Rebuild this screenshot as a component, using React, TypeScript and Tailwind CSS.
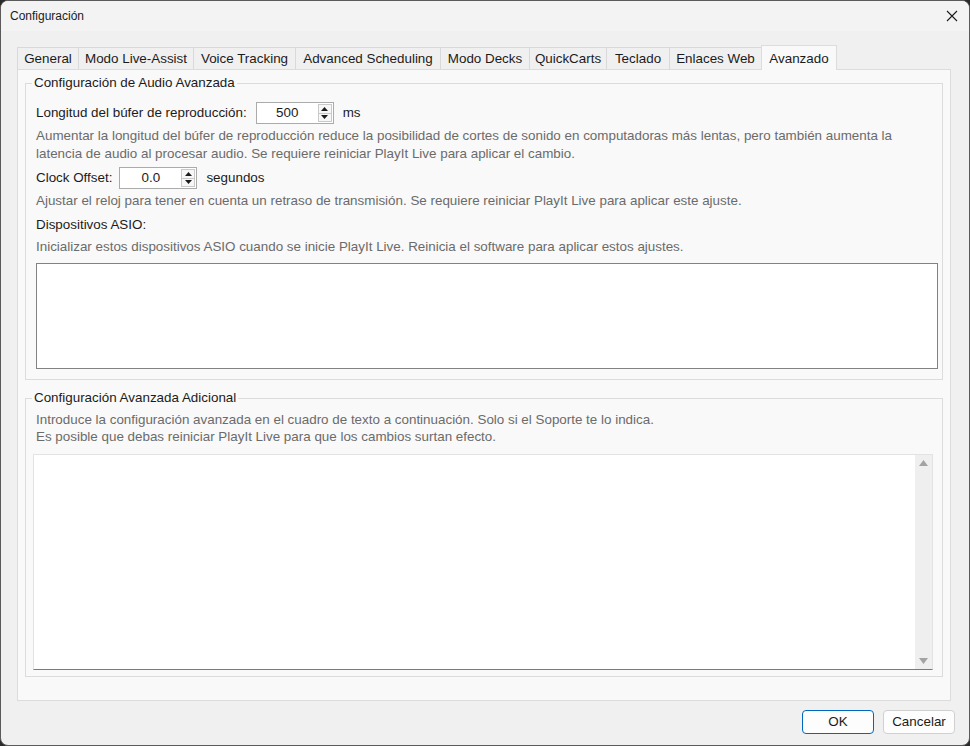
import React from 'react';

const tabs = [
  { label: 'General', w: 'w-[61px]' },
  { label: 'Modo Live-Assist', w: 'w-[115px]' },
  { label: 'Voice Tracking', w: 'w-[102px]' },
  { label: 'Advanced Scheduling', w: 'w-[145px]' },
  { label: 'Modo Decks', w: 'w-[89px]' },
  { label: 'QuickCarts', w: 'w-[77px]' },
  { label: 'Teclado', w: 'w-[63px]' },
  { label: 'Enlaces Web', w: 'w-[92px]' },
];

const Arrow = ({ down }: { down?: boolean }) => (
  <svg width="7" height="4" viewBox="0 0 7 4">
    {down ? <path d="M0 0h7L3.5 4z" fill="#1b1b1b" /> : <path d="M0 4h7L3.5 0z" fill="#1b1b1b" />}
  </svg>
);

const Spinner = ({ value }: { value: string }) => (
  <div className="flex h-[22px] w-[78px] border border-[#ababab] bg-white">
    <div className="flex flex-1 items-center justify-center text-[13.4px] text-[#1b1b1b]">{value}</div>
    <div className="flex w-[15px] flex-col py-[1px] pr-[1px]">
      <div className="flex flex-1 items-center justify-center border border-[#c9c9c9] bg-[#f7f7f7]"><Arrow /></div>
      <div className="flex flex-1 items-center justify-center border border-t-0 border-[#c9c9c9] bg-[#f7f7f7]"><Arrow down /></div>
    </div>
  </div>
);

export default function App() {
  return (
    <div className="h-[746px] w-[970px] bg-[#2a2a2a] font-['Liberation_Sans',Arial,sans-serif] text-[#1b1b1b]">
      <div className="flex h-full w-full flex-col overflow-hidden rounded-[8px] border border-[#5a5a5a] bg-[#f0f0f0]">
        {/* Title bar */}
        <div className="flex h-[30px] shrink-0 items-center justify-between bg-[#f3f3f3] pl-[9px] pr-[9px]">
          <span className="text-[12px] text-[#1b1b1b]">Configuración</span>
          <svg width="12" height="12" viewBox="0 0 12 12" className="mr-[2px]">
            <path d="M1 1l10 10M11 1L1 11" stroke="#1b1b1b" strokeWidth="1.1" />
          </svg>
        </div>

        {/* Tabs */}
        <div className="mt-[14px] flex h-[24px] items-end pl-[16px]">
          {tabs.map(t => (
            <div
              key={t.label}
              className={`${t.w} flex h-[22px] items-center justify-center border-l border-t border-[#d9d9d9] bg-[#f0f0f0] pt-[1px] text-[13.4px]`}
            >
              {t.label}
            </div>
          ))}
          <div className="relative z-10 -mb-[1px] flex h-[25px] w-[76px] items-start justify-center border border-b-0 border-[#dcdcdc] bg-[#f9f9f9] pt-[3px] text-[13.4px]">
            Avanzado
          </div>
        </div>

        {/* Panel */}
        <div className="ml-[16px] flex h-[632px] w-[934px] flex-col border border-[#dcdcdc] bg-[#f9f9f9] px-[7px]">
          <fieldset className="mt-[5px] border border-[#dcdcdc] pb-[10px] pl-[10px] pr-[4px]">
            <legend className="-ml-[4px] px-[2px] text-[13.4px] leading-[16px]">Configuración de Audio Avanzada</legend>
            <div className="mt-[11px] flex items-center">
              <span className="text-[13.4px]">Longitud del búfer de reproducción:</span>
              <div className="ml-[9px]"><Spinner value="500" /></div>
              <span className="ml-[9px] text-[13.4px]">ms</span>
            </div>
            <div className="mt-[3px] text-[13.4px] leading-[18px] text-[#6b6b6b]">
              Aumentar la longitud del búfer de reproducción reduce la posibilidad de cortes de sonido en computadoras más lentas, pero también aumenta la<br />
              latencia de audio al procesar audio. Se requiere reiniciar PlayIt Live para aplicar el cambio.
            </div>
            <div className="mt-[4px] flex items-center">
              <span className="text-[13.4px]">Clock Offset:</span>
              <div className="ml-[7px]"><Spinner value="0.0" /></div>
              <span className="ml-[9px] text-[13.4px]">segundos</span>
            </div>
            <div className="mt-[3px] text-[13.4px] leading-[18px] text-[#6b6b6b]">
              Ajustar el reloj para tener en cuenta un retraso de transmisión. Se requiere reiniciar PlayIt Live para aplicar este ajuste.
            </div>
            <div className="mt-[6px] text-[13.4px] leading-[18px]">Dispositivos ASIO:</div>
            <div className="mt-[4px] text-[13.4px] leading-[18px] text-[#6b6b6b]">
              Inicializar estos dispositivos ASIO cuando se inicie PlayIt Live. Reinicia el software para aplicar estos ajustes.
            </div>
            <div className="mt-[7px] h-[106px] border border-[#828282] bg-white" />
          </fieldset>

          <fieldset className="mt-[10px] border border-[#dcdcdc] pb-[6px] pl-[7px] pr-[9px]">
            <legend className="-ml-[1px] px-[2px] text-[13.4px] leading-[16px]">Configuración Avanzada Adicional</legend>
            <div className="ml-[3px] mt-[5px] text-[13.4px] leading-[17px] text-[#6b6b6b]">
              Introduce la configuración avanzada en el cuadro de texto a continuación. Solo si el Soporte te lo indica.<br />
              Es posible que debas reiniciar PlayIt Live para que los cambios surtan efecto.
            </div>
            <div className="mt-[9px] flex h-[216px] border border-[#e3e3e3] border-b-[#7a7a7a] bg-white">
              <div className="flex-1" />
              <div className="flex w-[17px] flex-col items-center justify-between bg-[#efefef] py-[5px]">
                <svg width="9" height="6" viewBox="0 0 9 6"><path d="M0 6h9L4.5 0z" fill="#a3a3a3" /></svg>
                <svg width="9" height="6" viewBox="0 0 9 6"><path d="M0 0h9L4.5 6z" fill="#a3a3a3" /></svg>
              </div>
            </div>
          </fieldset>
        </div>

        {/* Buttons */}
        <div className="mt-[9px] flex justify-end gap-[9px] pr-[14px]">
          <button className="h-[24px] w-[72px] rounded-[4px] border border-[#0067c0] bg-[#fdfdfd] text-[13.4px] text-[#1b1b1b]">OK</button>
          <button className="h-[24px] w-[72px] rounded-[4px] border border-[#d0d0d0] bg-[#fdfdfd] text-[13.4px] text-[#1b1b1b]">Cancelar</button>
        </div>
      </div>
    </div>
  );
}
